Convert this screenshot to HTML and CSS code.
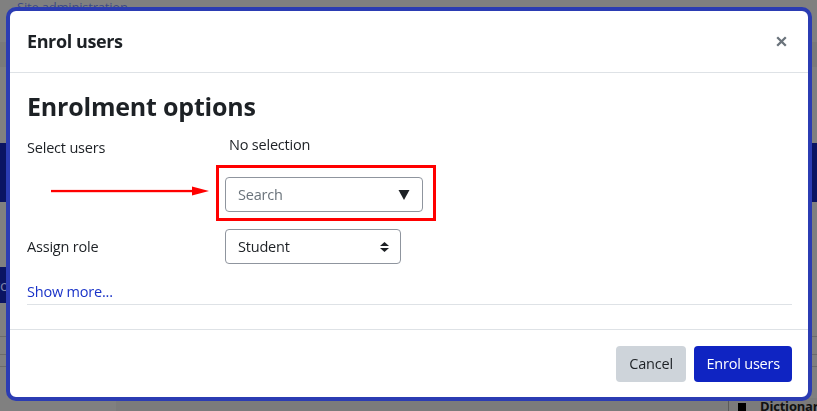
FILE: index.html
```html
<!DOCTYPE html>
<html lang="en">
<head>
<meta charset="utf-8">
<title>Enrol users</title>
<link rel="stylesheet" href="styles.css">
</head>
<body>
<div class="page">
  <div class="page-top"><span class="crumb">Site administration</span></div>
  <div class="page-band"></div>
  <div class="page-gap1"></div>
  <div class="page-nav"></div>
  <div class="page-gap2"></div>
  <div class="page-nav2"><span class="nav2-text">ro</span></div>
  <div class="page-rows">
    <div class="row-line l1"></div>
    <div class="row-line l2"></div>
    <div class="row-line l3"></div>
  </div>
  <div class="page-bottom">
    <div class="bottom-left"></div>
    <div class="bottom-right"><span class="dict-icon"></span><span class="dict-text">Dictionary</span></div>
  </div>
</div>

<div class="modal" role="dialog" aria-labelledby="modal-title">
  <div class="modal-header">
    <h5 class="modal-title" id="modal-title">Enrol users</h5>
    <button class="close" type="button" aria-label="Close">
      <svg width="11" height="11" viewBox="0 0 11 11"><path d="M1.2 1.2 L9.8 9.8 M9.8 1.2 L1.2 9.8" stroke="#6a737b" stroke-width="2.3" stroke-linecap="butt" fill="none"/></svg>
    </button>
  </div>
  <div class="modal-body">
    <h3 class="section-title">Enrolment options</h3>
    <div class="form-grid">
      <div class="label label-select">Select users</div>
      <div class="value-selection">No selection</div>

      <div class="arrow-cell">
        <svg width="158" height="10" viewBox="0 0 158 10"><rect x="0" y="3.9" width="146" height="2.3" fill="#f00"/><polygon points="141,0.5 158,5 141,9.5" fill="#f00"/></svg>
      </div>
      <div class="highlight">
        <div class="search-input">
          <span class="placeholder">Search</span>
          <svg width="12" height="10" viewBox="0 0 12 10"><polygon points="0.5,0 11.5,0 6,10" fill="#1d2125"/></svg>
        </div>
      </div>

      <div class="label label-role">Assign role</div>
      <div class="select-box">
        <span>Student</span>
        <svg width="9" height="10" viewBox="0 0 9 10"><polygon points="0,4 4.5,0 9,4" fill="#1d2125"/><polygon points="0,6 9,6 4.5,10" fill="#1d2125"/></svg>
      </div>
    </div>
    <div class="more"><a class="show-more" href="#">Show more...</a></div>
  </div>
  <div class="modal-footer">
    <button class="btn btn-secondary" type="button">Cancel</button>
    <button class="btn btn-primary" type="button">Enrol users</button>
  </div>
</div>
</body>
</html>
```

FILE: styles.css
```css
* { box-sizing: border-box; }

html, body {
  margin: 0;
  padding: 0;
}

body {
  width: 817px;
  height: 411px;
  overflow: hidden;
  background: #808080;
  font-family: "Open Sans", "Noto Sans", "DejaVu Sans", sans-serif;
  font-size: 14.5px;
  letter-spacing: -0.2px;
  color: #1d2125;
}

/* dimmed page behind the dialog */
.page {
  height: 411px;
  display: flex;
  flex-direction: column;
}

.page-top {
  height: 42px;
  padding: 0 0 0 17px;
  overflow: hidden;
}

.crumb {
  display: block;
  margin-top: -2px;
  font-size: 13px;
  color: #3d4a86;
}

.page-band {
  height: 25px;
  background: #7a7a7a;
}

.page-gap1 { height: 76px; }

.page-nav {
  height: 59px;
  background: #0a1462;
}

.page-gap2 { height: 65px; }

.page-nav2 {
  height: 36px;
  width: 120px;
  background: #0a1462;
  display: flex;
  align-items: center;
  overflow: hidden;
}

.nav2-text {
  color: #7d82a8;
  font-size: 15px;
  margin-left: -6px;
}

.page-rows {
  height: 95px;
  display: flex;
  flex-direction: column;
}

.row-line { height: 1px; background: #6b6b6b; }
.l1 { margin-top: 33px; }
.l2 { margin-top: 17px; }
.l3 { margin-top: 11px; }

.page-bottom {
  flex: 1;
  display: flex;
  justify-content: space-between;
  background: #7b7b7b;
}

.bottom-left { width: 116px; background: #808080; }

.bottom-right {
  width: 89px;
  border-left: 1px solid #5a5a5a;
  display: flex;
  align-items: flex-end;
  gap: 14px;
  padding-left: 9px;
  overflow: hidden;
}

.dict-icon {
  flex: none;
  width: 8px;
  height: 8px;
  background: #000;
}

.dict-text {
  font-weight: 700;
  font-size: 13px;
  line-height: 9px;
  color: #111;
  white-space: nowrap;
}

/* dialog */
.modal {
  position: fixed;
  left: 6px;
  top: 7px;
  width: 806px;
  height: 394px;
  border: 4px solid #2b3cb3;
  border-radius: 10px;
  background: #fff;
  display: flex;
  flex-direction: column;
  overflow: hidden;
}

.modal-header {
  height: 62px;
  flex: none;
  display: flex;
  align-items: center;
  justify-content: space-between;
  padding: 0 21px 0 17px;
  border-bottom: 1px solid #dee2e6;
}

.modal-title {
  margin: 0;
  font-size: 18px;
  font-weight: 700;
  letter-spacing: -0.4px;
  line-height: 29px;
  color: #1d2125;
}

.close {
  border: 0;
  background: none;
  padding: 0;
  margin: 0;
  width: 11px;
  height: 11px;
  display: flex;
}

.modal-body {
  flex: 1;
  padding: 18px 16px 0 17px;
}

.section-title {
  margin: 0 0 10px;
  font-size: 25px;
  font-weight: 700;
  letter-spacing: -0.2px;
  line-height: 31px;
  color: #1d2125;
}

.form-grid {
  display: grid;
  grid-template-columns: 198px 1fr;
  align-items: start;
}

.label {
  line-height: 22px;
}

.label-select { padding-top: 5px; }

.value-selection {
  line-height: 22px;
  padding: 2px 0 0 4px;
}

.arrow-cell {
  align-self: center;
  padding: 2px 0 0 24px;
  display: flex;
}

.highlight {
  justify-self: start;
  margin: 6px 0 0 -9px;
  border: 3px solid #f00;
  padding: 9px 10px 6px 6px;
}

.search-input {
  width: 198px;
  height: 35px;
  border: 1px solid #8f959e;
  border-radius: 4px;
  display: flex;
  align-items: center;
  justify-content: space-between;
  padding: 0 12px 0 12px;
}

.placeholder {
  color: #6a737b;
}

.label-role {
  align-self: center;
  margin-top: 8px;
}

.select-box {
  margin-top: 8px;
  width: 176px;
  height: 35px;
  border: 1px solid #8f959e;
  border-radius: 4px;
  display: flex;
  align-items: center;
  justify-content: space-between;
  padding: 0 11px 0 12px;
}

.more {
  margin-top: 17px;
  padding-bottom: 1px;
  border-bottom: 1px solid #dee2e6;
}

.show-more {
  color: #1a33c8;
  text-decoration: none;
  line-height: 22px;
}

.modal-footer {
  flex: none;
  height: 68px;
  border-top: 1px solid #dee2e6;
  display: flex;
  justify-content: flex-end;
  align-items: flex-start;
  gap: 8px;
  padding: 16px 16px 0 0;
}

.btn {
  font-family: inherit;
  font-size: 14.5px;
  letter-spacing: -0.2px;
  height: 36px;
  border: 0;
  border-radius: 4px;
  padding: 0 12px;
  line-height: 36px;
}

.btn-secondary {
  background: #ced4da;
  color: #1d2125;
  padding: 0 13.5px;
}

.btn-primary {
  background: #0f24c2;
  color: #fff;
}
```
